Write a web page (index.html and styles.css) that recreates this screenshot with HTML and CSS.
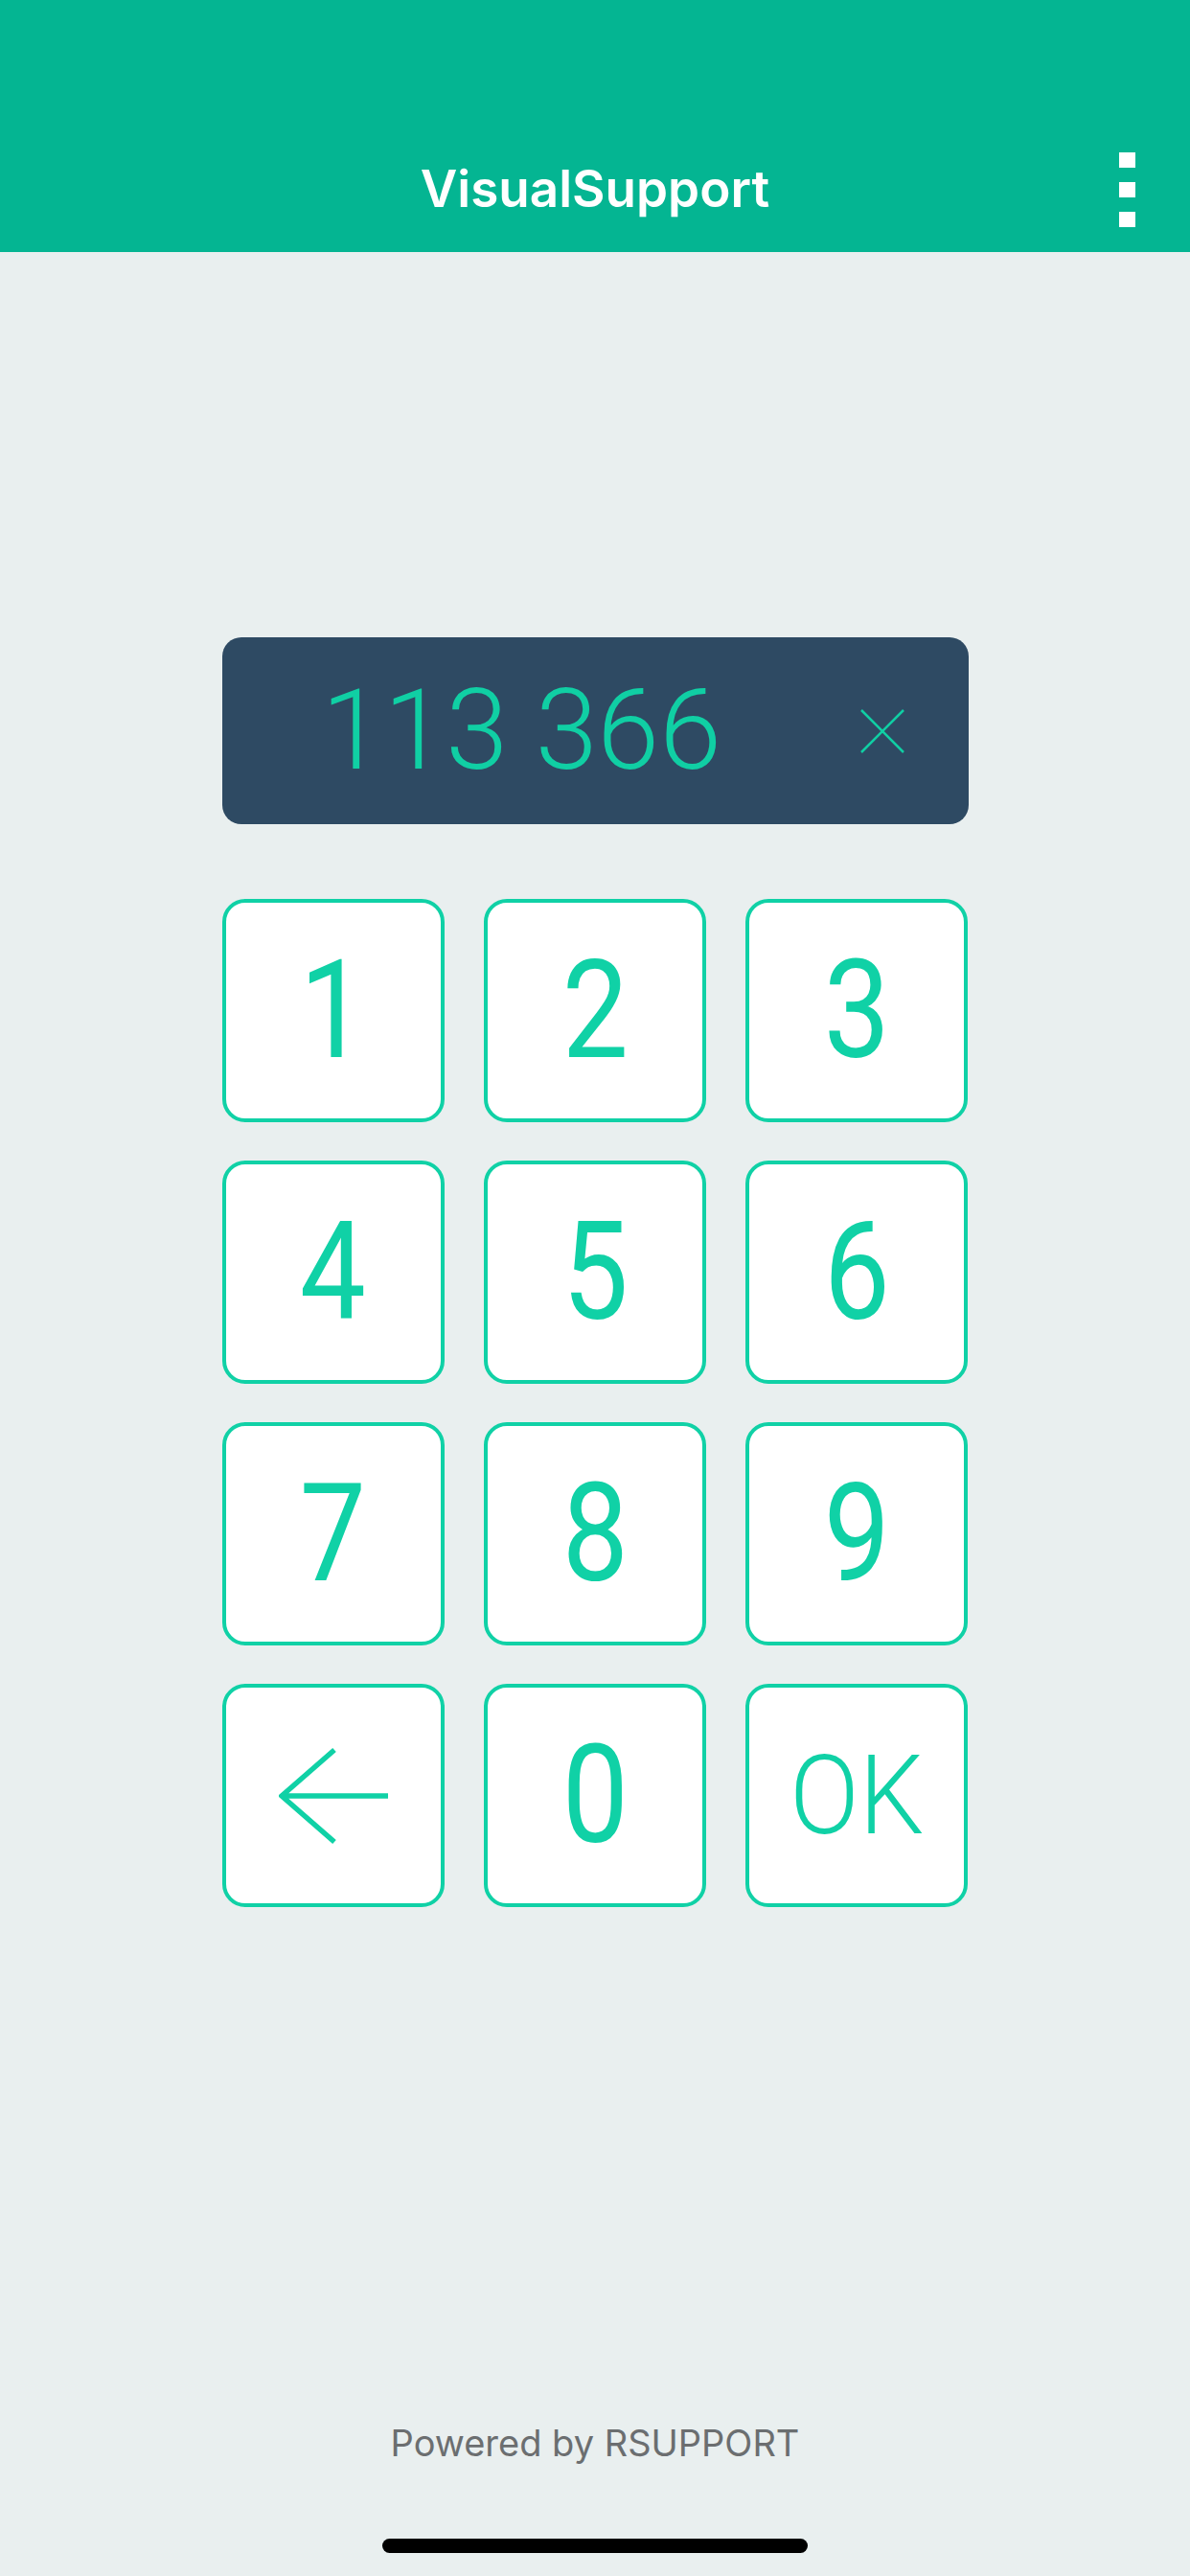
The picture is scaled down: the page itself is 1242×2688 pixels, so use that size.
FILE: index.html
```html
<!DOCTYPE html>
<html lang="en">
<head>
<meta charset="utf-8">
<title>VisualSupport</title>
<link rel="stylesheet" href="styles.css">
</head>
<body>
<div class="screen">
  <header class="appbar">
    <div class="navbar">
      <div class="nav-side"></div>
      <h1 class="nav-title">VisualSupport</h1>
      <div class="nav-side nav-side-right">
        <div class="menu-btn" aria-label="More">
          <span class="menu-dot"></span>
          <span class="menu-dot"></span>
          <span class="menu-dot"></span>
        </div>
      </div>
    </div>
  </header>

  <main class="content">
    <div class="display">
      <span class="display-code">113 366</span>
      <svg class="display-clear" width="46" height="46" viewBox="0 0 46 46" aria-label="Clear">
        <path d="M1 1 L45 45 M45 1 L1 45" stroke="#10cfa4" stroke-width="2.5" fill="none"/>
      </svg>
    </div>

    <div class="keypad">
      <div class="key"><span class="key-num">1</span></div>
      <div class="key"><span class="key-num">2</span></div>
      <div class="key"><span class="key-num">3</span></div>
      <div class="key"><span class="key-num">4</span></div>
      <div class="key"><span class="key-num">5</span></div>
      <div class="key"><span class="key-num">6</span></div>
      <div class="key"><span class="key-num">7</span></div>
      <div class="key"><span class="key-num">8</span></div>
      <div class="key"><span class="key-num">9</span></div>
      <div class="key">
        <svg class="key-back" width="114" height="102" viewBox="0 0 114 102" aria-label="Back">
          <path d="M58 3 L3 51 L58 99 M3 51 H114" stroke="#10d1a6" stroke-width="5.5" fill="none" stroke-linejoin="miter"/>
        </svg>
      </div>
      <div class="key"><span class="key-num">0</span></div>
      <div class="key"><span class="key-ok">OK</span></div>
    </div>
  </main>

  <footer class="footer">
    <p class="powered">Powered by RSUPPORT</p>
    <div class="home-indicator"></div>
  </footer>
</div>
</body>
</html>
```

FILE: styles.css
```css
* {
  box-sizing: border-box;
}

html, body {
  margin: 0;
  padding: 0;
}

body {
  width: 1242px;
  height: 2688px;
  background: #e9efef;
  font-family: "Inter", "Roboto", "Liberation Sans", sans-serif;
}

.screen {
  width: 1242px;
  height: 2688px;
  display: flex;
  flex-direction: column;
  background: #e9efef;
}

/* ---------- App bar ---------- */
.appbar {
  background: #04b592;
  height: 263px;
  padding-top: 132px;
}

.navbar {
  height: 131px;
  display: grid;
  grid-template-columns: 1fr auto 1fr;
  align-items: center;
}

.nav-title {
  margin: 0;
  color: #ffffff;
  font-family: "Inter", "Roboto", sans-serif;
  font-weight: 600;
  font-size: 53px;
  letter-spacing: 0;
  line-height: 1;
}

.nav-side-right {
  display: flex;
  justify-content: flex-end;
  padding-right: 57px;
}

.menu-btn {
  display: flex;
  flex-direction: column;
  gap: 15px;
}

.menu-dot {
  display: block;
  width: 17px;
  height: 16px;
  background: #ffffff;
}

/* ---------- Content ---------- */
.content {
  width: 779px;
  margin: 0 auto;
  padding-top: 402px;
}

.display {
  height: 195px;
  background: #2e4a63;
  border-radius: 20px;
  display: flex;
  align-items: center;
  padding-left: 104px;
  padding-right: 67px;
}

.display-code {
  color: #10cfa4;
  font-family: "Roboto", "Inter", sans-serif;
  font-weight: 300;
  font-size: 117px;
  line-height: 1;
  letter-spacing: 0;
  font-variant-numeric: tabular-nums;
}

.display-clear {
  margin-left: auto;
  display: block;
}

.keypad {
  margin-top: 78px;
  display: grid;
  grid-template-columns: repeat(3, 1fr);
  grid-auto-rows: 233px;
  column-gap: 41px;
  row-gap: 40px;
}

.key {
  background: #ffffff;
  border: 4px solid #10d1a6;
  border-radius: 24px;
  display: flex;
  align-items: center;
  justify-content: center;
}

.key-num {
  display: inline-block;
  color: #10d1a6;
  font-family: "Roboto", "Liberation Sans", sans-serif;
  font-weight: 400;
  font-size: 143px;
  line-height: 1;
  transform: scaleX(0.86);
}

.key-ok {
  display: inline-block;
  color: #10d1a6;
  font-family: "Roboto", "Liberation Sans", sans-serif;
  font-weight: 300;
  font-size: 115px;
  line-height: 1;
  transform: scaleX(0.93);
}

.key-back {
  display: block;
}

/* ---------- Footer ---------- */
.footer {
  margin-top: auto;
  display: flex;
  flex-direction: column;
  align-items: center;
}

.powered {
  margin: 0;
  color: #6b6e70;
  font-family: "Inter", "Roboto", sans-serif;
  font-size: 38px;
  line-height: 46px;
  font-weight: 400;
}

.home-indicator {
  margin-top: 77px;
  margin-bottom: 24px;
  width: 444px;
  height: 15px;
  border-radius: 8px;
  background: #000000;
}
```
